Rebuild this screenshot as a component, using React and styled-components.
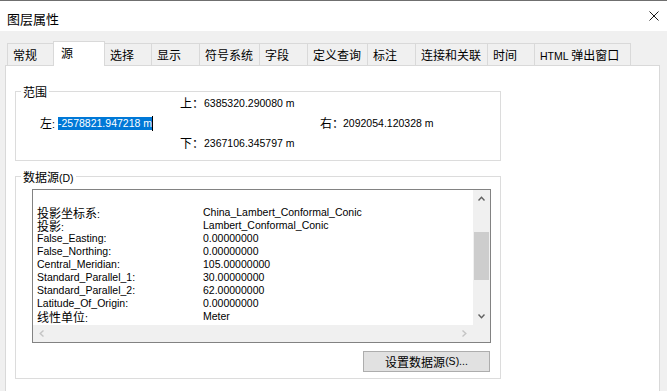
import React from 'react';
import styled, { createGlobalStyle } from 'styled-components';

const GlobalStyle = createGlobalStyle`
  *, *::before, *::after { box-sizing: border-box; }
  html, body { margin: 0; padding: 0; background: #f0f0f0; }
  body {
    font-family: "Liberation Sans", Arial, "Noto Sans CJK SC", sans-serif;
    font-size: 10.5px;
    color: #000;
    overflow: hidden;
  }
`;

const CJK_RE = /([\u2E80-\u9FFF\u3000-\u303F\uFF00-\uFFEF]+)/;

const Han = styled.span`
  display: inline-block;
  font-family: "Noto Sans CJK SC", sans-serif;
  font-size: 12px;
  line-height: inherit;
`;

function Txt({ children }) {
  const parts = String(children).split(CJK_RE);
  return parts.map((p, i) =>
    p === '' ? null : i % 2 === 1 ? <Han key={i}>{p}</Han> : <React.Fragment key={i}>{p}</React.Fragment>
  );
}

const Window = styled.div`
  width: 667px;
  height: 391px;
  display: flex;
  flex-direction: column;
  border-top: 1px solid #6f6f6f;
  background: #f0f0f0;
  overflow: hidden;
`;

const TitleBar = styled.div`
  flex: none;
  height: 30px;
  background: #fff;
  display: flex;
  align-items: center;
  justify-content: space-between;
  padding: 0 8px 0 7px;
`;

const Title = styled.div`
  font-family: "Noto Sans CJK SC", sans-serif;
  font-size: 13px;
  line-height: 17px;
  padding-top: 4px;
`;

const CloseIcon = () => (
  <svg width="10" height="10" viewBox="0 0 10 10">
    <path d="M0.5 0.5 L9.5 9.5 M9.5 0.5 L0.5 9.5" stroke="#1a1a1a" strokeWidth="1" fill="none" />
  </svg>
);

const Body = styled.div`
  flex: 1;
  display: flex;
  flex-direction: column;
  padding: 10px 7px 0 5px;
  min-height: 0;
`;

const TabStrip = styled.div`
  flex: none;
  display: flex;
  align-items: flex-end;
  height: 24px;
  margin-left: 2px;
  position: relative;
  z-index: 1;
`;

const Tab = styled.div`
  flex: none;
  position: relative;
  width: ${(p) => p.$w}px;
  height: ${(p) => (p.$active ? 25 : 22)}px;
  margin-bottom: ${(p) => (p.$active ? -1 : 0)}px;
  margin-right: ${(p) => (p.$active ? -1 : 0)}px;
  z-index: ${(p) => (p.$active ? 2 : 1)};
  border-top: 1px solid #d9d9d9;
  border-left: 1px solid #d9d9d9;
  border-right: ${(p) => (p.$active || p.$last ? '1px solid #d9d9d9' : 'none')};
  background: ${(p) => (p.$active ? '#fff' : '#f0f0f0')};
  padding: 3px 0 0 ${(p) => (p.$active ? 7 : 5)}px;
  line-height: 16px;
  white-space: nowrap;
`;

const Panel = styled.div`
  flex: 1;
  background: #fff;
  border: 1px solid #d9d9d9;
  border-bottom: none;
  display: flex;
  flex-direction: column;
  align-items: flex-start;
`;

const Group = styled.section`
  position: relative;
  width: 486px;
  margin: ${(p) => p.$mt}px 0 0 9px;
  border: 1px solid #dcdcdc;
  padding: ${(p) => p.$pad};
  display: flex;
  flex-direction: column;
`;

const GroupTitle = styled.div`
  position: absolute;
  top: -8px;
  left: 5px;
  padding: 0 2px;
  background: #fff;
  line-height: 16px;
  white-space: nowrap;
`;

const ExtentGrid = styled.div`
  display: grid;
  grid-template-columns: 140px 140px 1fr;
  grid-auto-rows: 20px;
`;

const ExtentCell = styled.div`
  grid-column: ${(p) => p.$col};
  grid-row: ${(p) => p.$row};
  display: flex;
  align-items: center;
  line-height: 14px;
  white-space: nowrap;
`;

const ExtLabel = styled.span`
  flex: none;
  width: ${(p) => p.$w}px;
  white-space: nowrap;
`;

const Selected = styled.span`
  background: #0078d7;
  color: #fff;
  line-height: 13px;
  height: 13px;
  display: inline-block;
`;

const Caret = styled.span`
  display: inline-block;
  width: 1px;
  height: 15px;
  background: #000;
`;

const ListBox = styled.div`
  width: 459px;
  height: 154px;
  border: 1px solid #828282;
  background: #fff;
  display: grid;
  grid-template-columns: 1fr 17px;
  grid-template-rows: 1fr 17px;
`;

const ListContent = styled.div`
  padding: 16px 0 0 4px;
  overflow: hidden;
`;

const Row = styled.div`
  display: grid;
  grid-template-columns: 166px 1fr;
  height: 13px;
  line-height: 13px;
  white-space: nowrap;
`;

const VScroll = styled.div`
  background: #f0f0f0;
  display: flex;
  flex-direction: column;
`;

const ArrowBtn = styled.div`
  flex: none;
  width: 17px;
  height: 17px;
  display: flex;
  align-items: center;
  justify-content: center;
`;

const Track = styled.div`
  flex: 1;
`;

const Thumb = styled.div`
  width: 15px;
  height: 48px;
  margin: 25px 0 0 1px;
  background: #cdcdcd;
`;

const HScroll = styled.div`
  background: #f0f0f0;
  display: flex;
  justify-content: space-between;
  align-items: center;
`;

const Corner = styled.div`
  background: #f0f0f0;
`;

const Button = styled.button`
  align-self: flex-end;
  width: 127px;
  height: 21px;
  margin: 8px 1px 0 0;
  padding: 0;
  background: #e1e1e1;
  border: 1px solid #adadad;
  font-family: inherit;
  font-size: inherit;
  color: #000;
  line-height: 17px;
  display: flex;
  align-items: center;
  justify-content: center;
  white-space: nowrap;
`;

const Chevron = ({ dir, color }) => {
  const pts = {
    up: '0.5,4.5 3.5,1.2 6.5,4.5',
    down: '0.5,0.5 3.5,3.8 6.5,0.5',
    left: '4.5,0.5 1.2,3.5 4.5,6.5',
    right: '0.5,0.5 3.8,3.5 0.5,6.5',
  }[dir];
  const vertical = dir === 'up' || dir === 'down';
  return (
    <svg width={vertical ? 7 : 5} height={vertical ? 5 : 7}>
      <polyline points={pts} fill="none" stroke={color} strokeWidth="1.4" />
    </svg>
  );
};

const tabs = [
  ['常规', 46],
  ['源', 52],
  ['选择', 47],
  ['显示', 48],
  ['符号系统', 60],
  ['字段', 48],
  ['定义查询', 60],
  ['标注', 48],
  ['连接和关联', 72],
  ['时间', 47],
  ['HTML 弹出窗口', 97],
];

const rows = [
  ['投影坐标系:', 'China_Lambert_Conformal_Conic'],
  ['投影:', 'Lambert_Conformal_Conic'],
  ['False_Easting:', '0.00000000'],
  ['False_Northing:', '0.00000000'],
  ['Central_Meridian:', '105.00000000'],
  ['Standard_Parallel_1:', '30.00000000'],
  ['Standard_Parallel_2:', '62.00000000'],
  ['Latitude_Of_Origin:', '0.00000000'],
  ['线性单位:', 'Meter'],
];

export default function App() {
  return (
    <>
      <GlobalStyle />
      <Window>
        <TitleBar>
          <Title>图层属性</Title>
          <CloseIcon />
        </TitleBar>
        <Body>
          <TabStrip>
            {tabs.map(([label, w], i) => (
              <Tab key={label} $w={w} $active={i === 1} $last={i === tabs.length - 1}>
                <Txt>{label}</Txt>
              </Tab>
            ))}
          </TabStrip>
          <Panel>
            <Group $mt={25} $pad="1px 0 7px 24px">
              <GroupTitle><Txt>范围</Txt></GroupTitle>
              <ExtentGrid>
                <ExtentCell $col={2} $row={1}>
                  <ExtLabel $w={24}><Txt>上：</Txt></ExtLabel>6385320.290080 m
                </ExtentCell>
                <ExtentCell $col={1} $row={2}>
                  <ExtLabel $w={18}><Txt>左:</Txt></ExtLabel>
                  <Selected>-2578821.947218 m</Selected>
                  <Caret />
                </ExtentCell>
                <ExtentCell $col={3} $row={2}>
                  <ExtLabel $w={23}><Txt>右：</Txt></ExtLabel>2092054.120328 m
                </ExtentCell>
                <ExtentCell $col={2} $row={3}>
                  <ExtLabel $w={24}><Txt>下：</Txt></ExtLabel>2367106.345797 m
                </ExtentCell>
              </ExtentGrid>
            </Group>
            <Group $mt={15} $pad="12px 9px 6px 16px">
              <GroupTitle><Txt>数据源(D)</Txt></GroupTitle>
              <ListBox>
                <ListContent>
                  {rows.map(([k, v]) => (
                    <Row key={k}>
                      <span><Txt>{k}</Txt></span>
                      <span>{v}</span>
                    </Row>
                  ))}
                </ListContent>
                <VScroll>
                  <ArrowBtn><Chevron dir="up" color="#606060" /></ArrowBtn>
                  <Track><Thumb /></Track>
                  <ArrowBtn><Chevron dir="down" color="#606060" /></ArrowBtn>
                </VScroll>
                <HScroll>
                  <ArrowBtn><Chevron dir="left" color="#c4c4c4" /></ArrowBtn>
                  <ArrowBtn><Chevron dir="right" color="#c4c4c4" /></ArrowBtn>
                </HScroll>
                <Corner />
              </ListBox>
              <Button><Txt>设置数据源(S)...</Txt></Button>
            </Group>
          </Panel>
        </Body>
      </Window>
    </>
  );
}
